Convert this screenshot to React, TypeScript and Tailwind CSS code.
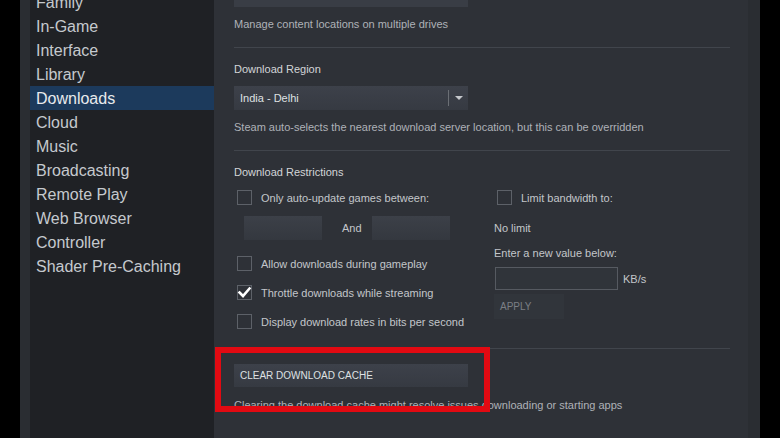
import React from "react";

const navItems = [
  "Family",
  "In-Game",
  "Interface",
  "Library",
  "Downloads",
  "Cloud",
  "Music",
  "Broadcasting",
  "Remote Play",
  "Web Browser",
  "Controller",
  "Shader Pre-Caching",
];

function Checkbox({ checked = false }: { checked?: boolean }) {
  return (
    <div className="relative ml-[3px] h-[15px] w-[15px] shrink-0 border border-[#5d6168]">
      {checked && (
        <svg viewBox="0 0 15 15" className="absolute left-[-1px] top-[-1px] h-[15px] w-[15px]">
          <path d="M2.5 7.5 L6 11 L12.5 3.5" fill="none" stroke="#ffffff" strokeWidth="2.6" strokeLinecap="square" />
        </svg>
      )}
    </div>
  );
}

function CheckRow({ label, checked = false }: { label: string; checked?: boolean }) {
  return (
    <div className="flex h-[15px] items-center gap-[9px]">
      <Checkbox checked={checked} />
      <span className="text-[11px] leading-[14px] text-[#c3c6ca]">{label}</span>
    </div>
  );
}

export default function App() {
  return (
    <div className="flex h-[438px] w-[780px] overflow-hidden bg-black font-['Liberation_Sans',Arial,sans-serif]">
      <div className="w-[20px] shrink-0 bg-black" />
      <div className="w-[10px] shrink-0 bg-[#2a2d32]" />
      <nav className="w-[184px] shrink-0 bg-[#1f2125]">
        <div className="mt-[-10px] flex flex-col">
          {navItems.map((item) => (
            <div
              key={item}
              className={
                item === "Downloads"
                  ? "h-[24px] bg-[#1c3a5c] pl-[6px] pt-[2px] text-[16px] leading-[22px] text-[#e8eaec]"
                  : "h-[24px] pl-[6px] pt-[2px] text-[16px] leading-[22px] text-[#c5c9ce]"
              }
            >
              {item}
            </div>
          ))}
        </div>
      </nav>
      <main className="relative w-[534px] shrink-0 bg-[#2e3137] pl-[20px] pr-[18px]">
        <div className="h-[7px] w-[234px] bg-[#393d45]" />
        <div className="mt-[10px] text-[11px] leading-[14px] text-[#aeb2b7]">
          Manage content locations on multiple drives
        </div>
        <div className="mt-[16px] h-px bg-[#41454c]" />

        <div className="mt-[14px] text-[11px] leading-[14px] text-[#d3d5d8]">Download Region</div>
        <div className="mt-[10px] flex h-[24px] w-[234px] items-center bg-gradient-to-b from-[#3d414a] to-[#363a42]">
          <span className="flex-1 pl-[6px] text-[11px] leading-[14px] text-[#dfe1e3]">India - Delhi</span>
          <div className="h-[16px] w-px bg-[#6b6f75]" />
          <div className="flex w-[19px] justify-center">
            <svg viewBox="0 0 8 4" className="h-[4px] w-[8px]">
              <path d="M0 0 L8 0 L4 4 Z" fill="#c5c8cc" />
            </svg>
          </div>
        </div>
        <div className="mt-[10px] text-[11px] leading-[14px] text-[#aeb2b7]">
          Steam auto-selects the nearest download server location, but this can be overridden
        </div>
        <div className="mt-[16px] h-px bg-[#41454c]" />

        <div className="mt-[14px] text-[11px] leading-[14px] text-[#d3d5d8]">Download Restrictions</div>
        <div className="mt-[11px] flex">
          <div className="flex w-[260px] flex-col">
            <CheckRow label="Only auto-update games between:" />
            <div className="mt-[11px] flex h-[24px] items-center pl-[10px]">
              <div className="h-[24px] w-[78px] bg-gradient-to-b from-[#3c4048] to-[#34383f]" />
              <div className="w-[50px] pl-[20px] text-[11px] leading-[14px] text-[#c3c6ca]">And</div>
              <div className="h-[24px] w-[78px] bg-gradient-to-b from-[#3c4048] to-[#34383f]" />
            </div>
            <div className="mt-[16px]">
              <CheckRow label="Allow downloads during gameplay" />
            </div>
            <div className="mt-[14px]">
              <CheckRow label="Throttle downloads while streaming" checked />
            </div>
            <div className="mt-[14px]">
              <CheckRow label="Display download rates in bits per second" />
            </div>
          </div>
          <div className="flex flex-col">
            <CheckRow label="Limit bandwidth to:" />
            <div className="mt-[16px] text-[11px] leading-[14px] text-[#c3c6ca]">No limit</div>
            <div className="mt-[11px] text-[11px] leading-[14px] text-[#c3c6ca]">Enter a new value below:</div>
            <div className="mt-[7px] flex items-center">
              <div className="ml-[1px] h-[23px] w-[123px] border border-[#565a61] bg-[#30343a]" />
              <span className="ml-[5px] text-[11px] leading-[14px] text-[#c3c6ca]">KB/s</span>
            </div>
            <div className="mt-[4px] flex h-[25px] w-[70px] items-center bg-[#31353b] pl-[6px] text-[10px] leading-[12px] text-[#7b7f85]">
              APPLY
            </div>
          </div>
        </div>
        <div className="mt-[19px] h-px bg-[#41454c]" />

        <div className="mt-[15px] flex h-[23px] w-[234px] items-center bg-gradient-to-b from-[#3d414a] to-[#363a42] pl-[6px] text-[10px] leading-[12px] text-[#dfe1e3]">
          CLEAR DOWNLOAD CACHE
        </div>
        <div className="mt-[11px] text-[11px] leading-[14px] text-[#aeb2b7]">
          Clearing the download cache might resolve issues downloading or starting apps
        </div>

        <div className="pointer-events-none absolute left-[1px] top-[347px] h-[65px] w-[275px] border-[6px] border-[#e20a12]" />
      </main>
      <div className="w-[12px] shrink-0 bg-[#2a2d32]" />
      <div className="w-[20px] shrink-0 bg-black" />
    </div>
  );
}
